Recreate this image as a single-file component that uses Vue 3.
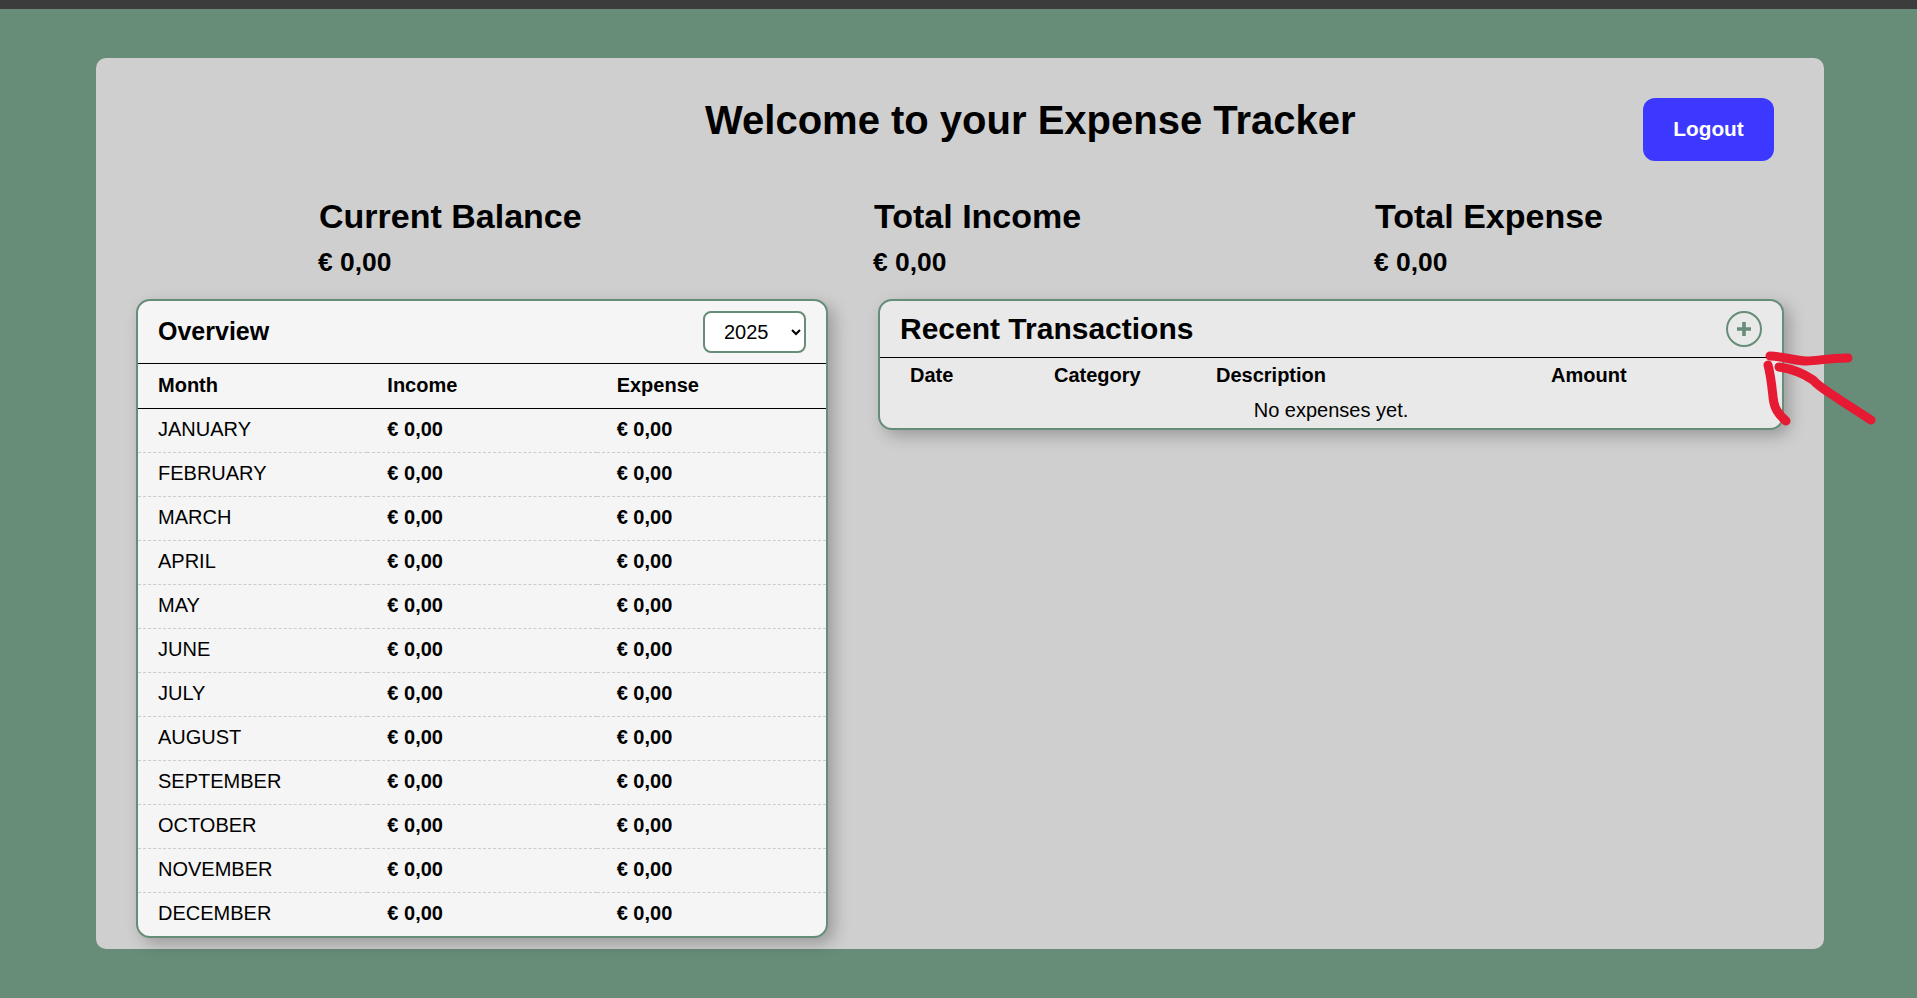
<template>
  <div class="page">
    <div class="topbar"></div>
    <main class="panel">
      <header class="header">
        <h1>Welcome to your Expense Tracker</h1>
        <button class="logout">Logout</button>
      </header>

      <section class="summary">
        <div v-for="item in summary" :key="item" class="summary-item">
          <h2>{{ item }}</h2>
          <p>€ 0,00</p>
        </div>
      </section>

      <section class="columns">
        <div class="card overview">
          <div class="overview-head">
            <h3>Overview</h3>
            <select class="year">
              <option>2025</option>
              <option>2024</option>
            </select>
          </div>
          <table class="months">
            <thead>
              <tr>
                <th>Month</th>
                <th>Income</th>
                <th>Expense</th>
              </tr>
            </thead>
            <tbody>
              <tr v-for="month in months" :key="month">
                <td>{{ month }}</td>
                <td class="money">€ 0,00</td>
                <td class="money">€ 0,00</td>
              </tr>
            </tbody>
          </table>
        </div>

        <div class="card recent">
          <div class="recent-head">
            <h3>Recent Transactions</h3>
            <button class="add" aria-label="Add expense">
              <svg width="16" height="16" viewBox="0 0 16 16">
                <path d="M8 1v14M1 8h14" stroke="#678d78" stroke-width="3.6" fill="none" />
              </svg>
            </button>
          </div>
          <table class="transactions">
            <thead>
              <tr>
                <th class="col-date">Date</th>
                <th class="col-category">Category</th>
                <th class="col-description">Description</th>
                <th>Amount</th>
              </tr>
            </thead>
            <tbody>
              <tr>
                <td colspan="4" class="empty">No expenses yet.</td>
              </tr>
            </tbody>
          </table>
        </div>
      </section>
    </main>

    <!-- hand drawn marker on top of the screenshot -->
    <svg class="scribble" width="1917" height="998" viewBox="0 0 1917 998">
      <g fill="none" stroke="#e61a32" stroke-width="9" stroke-linecap="round" stroke-linejoin="round">
        <path d="M1770 356 C1782 356 1795 361 1807 361 C1818 361 1826 358 1848 358" />
        <path d="M1768 365 C1771 376 1772 388 1773 397 C1774 408 1778 414 1786 421" />
        <path d="M1779 367 C1792 369 1803 373 1813 380 C1820 388 1832 394 1840 400 L1871 420" />
      </g>
    </svg>
  </div>
</template>

<script setup>
const summary = ['Current Balance', 'Total Income', 'Total Expense'];

const months = [
  'JANUARY', 'FEBRUARY', 'MARCH', 'APRIL', 'MAY', 'JUNE',
  'JULY', 'AUGUST', 'SEPTEMBER', 'OCTOBER', 'NOVEMBER', 'DECEMBER'
];
</script>

<style>
html, body {
  margin: 0;
  background: #678d78;
}
</style>

<style scoped>
.page {
  position: relative;
  height: 998px;
  overflow: hidden;
  background: #678d78;
  font-family: "Liberation Sans", Arial, sans-serif;
  color: #000;
}

.topbar {
  height: 9px;
  background: #3c3c3c;
}

.panel {
  box-sizing: border-box;
  width: 1728px;
  height: 891px;
  margin: 49px 0 0 96px;
  padding: 40px;
  background: #cfcfcf;
  border-radius: 10px;
}

.header {
  display: flex;
  justify-content: space-between;
  align-items: flex-start;
  padding: 0 10px 0 569px;
}

.header h1 {
  margin: 0;
  font-size: 40px;
  line-height: 44px;
  font-weight: 700;
}

.logout {
  width: 131px;
  height: 63px;
  padding-bottom: 2px;
  border: none;
  border-radius: 12px;
  background: #3c38ff;
  color: #fff;
  font-family: inherit;
  font-size: 20.8px;
  font-weight: 700;
}

.summary {
  display: grid;
  grid-template-columns: 555px 501px auto;
  margin-top: 36px;
  padding-left: 183px;
}

.summary-item h2 {
  margin: 0;
  font-size: 34px;
  line-height: 38px;
  font-weight: 700;
}

.summary-item p {
  margin: 13px 0 0 -1px;
  font-size: 26.4px;
  line-height: 29px;
  font-weight: 700;
}

.columns {
  display: flex;
  align-items: flex-start;
  justify-content: space-between;
  margin-top: 22px;
}

.card {
  box-sizing: border-box;
  border: 2px solid #678d78;
  border-radius: 14px;
  box-shadow: 6px 6px 16px rgba(0, 0, 0, 0.25);
  overflow: hidden;
}

.overview {
  width: 692px;
  height: 639px;
  background: #f5f5f5;
}

.overview-head {
  display: flex;
  justify-content: space-between;
  align-items: center;
  box-sizing: border-box;
  height: 63px;
  padding: 0 20px;
  border-bottom: 1px solid #000;
}

.overview-head h3 {
  margin: 0 0 2px;
  font-size: 25px;
  font-weight: 700;
}

.year {
  width: 103px;
  height: 42px;
  padding: 0 0 0 15px;
  border: 2px solid #678d78;
  border-radius: 8px;
  background: #fff;
  color: #000;
  font-family: inherit;
  font-size: 20px;
}

.months {
  width: 100%;
  table-layout: fixed;
  border-collapse: collapse;
  font-size: 20px;
}

.months th,
.months td {
  height: 44px;
  padding: 0 0 0 20px;
  text-align: left;
  box-sizing: border-box;
}

.months th {
  font-weight: 700;
  border-bottom: 1px solid #000;
}

.months td {
  padding-bottom: 2px;
  border-bottom: 1px dashed #ccc;
}

.money {
  font-weight: 700;
}

.recent {
  width: 906px;
  height: 131px;
  background: #e9e9e9;
}

.recent-head {
  display: flex;
  justify-content: space-between;
  align-items: center;
  box-sizing: border-box;
  height: 57px;
  padding: 0 20px 0 20px;
  border-bottom: 1px solid #000;
}

.recent-head h3 {
  margin: 0;
  font-size: 30px;
  font-weight: 700;
}

.add {
  display: flex;
  align-items: center;
  justify-content: center;
  box-sizing: border-box;
  width: 36px;
  height: 36px;
  padding: 0;
  border: 2px solid #678d78;
  border-radius: 50%;
  background: transparent;
}

.transactions {
  width: 100%;
  table-layout: fixed;
  border-collapse: collapse;
  font-size: 20px;
}

.transactions th {
  box-sizing: border-box;
  height: 35px;
  padding: 0 0 0 30px;
  text-align: left;
  font-weight: 700;
}

.col-date { width: 144px; }
.col-category { width: 162px; }
.col-description { width: 335px; }

.empty {
  height: 34px;
  padding: 0;
  text-align: center;
}

.scribble {
  position: absolute;
  top: 0;
  left: 0;
  pointer-events: none;
}
</style>
